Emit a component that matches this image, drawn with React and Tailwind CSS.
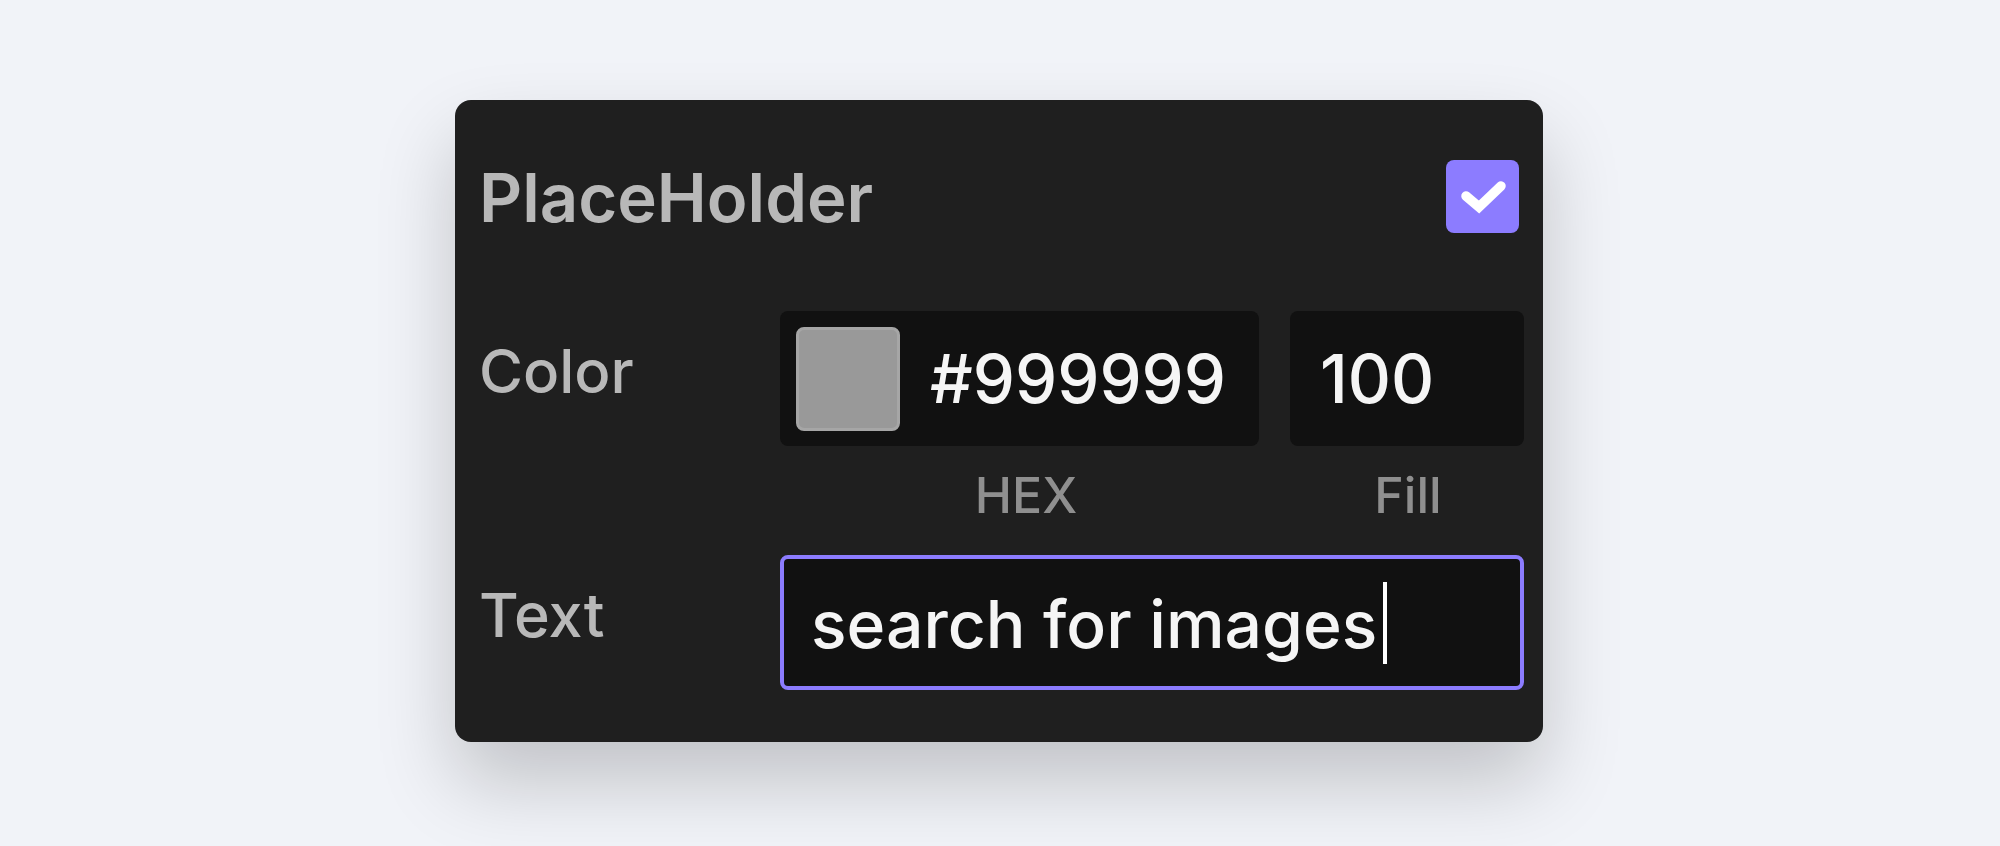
import React from 'react'

function App() {
  return (
    <div className="min-h-[846px] bg-[#f1f3f8] flex justify-center pt-[100px] pr-[2px] font-['Inter',sans-serif] [font-optical-sizing:none]">
      <div className="w-[1088px] h-[642px] bg-[#1f1f1f] rounded-[16px] shadow-[0_40px_80px_rgba(0,0,0,0.2)] pl-[24px] pr-[18px] flex flex-col">
        <div className="flex items-center justify-between mt-[59px] h-[74px] pr-[6px]">
          <span className="text-[67px] font-semibold text-[#b8b8b8] leading-none pt-[3px]">PlaceHolder</span>
          <div className="w-[73px] h-[73px] rounded-[8px] bg-[#8c7cff]">
            <svg width="73" height="73" viewBox="0 0 73 73" fill="none">
              <path d="M20 36 L33 47 L55 26" stroke="white" strokeWidth="9.5" strokeLinecap="round" />
            </svg>
          </div>
        </div>
        <div className="flex mt-[78px]">
          <span className="w-[301px] text-[60px] text-[#b8b8b8] font-medium leading-none pt-[30px]">Color</span>
          <div className="flex-1">
            <div className="flex gap-[31px]">
              <div className="w-[479px] h-[135px] bg-[#111111] rounded-[8px] flex items-center pl-[16px]">
                <div className="w-[104px] h-[104px] rounded-[8px] bg-[#999999] border-[3px] border-[#a6a6a6]" />
                <span className="ml-[30px] text-[67px] font-medium text-[#f5f5f5] leading-none">#999999</span>
              </div>
              <div className="w-[234px] h-[135px] bg-[#111111] rounded-[8px] flex items-center pl-[30px]">
                <span className="text-[67px] font-medium text-[#f5f5f5] leading-none">100</span>
              </div>
            </div>
            <div className="flex gap-[31px] mt-[24px]">
              <span className="w-[492px] text-center text-[50px] font-medium text-[#8f8f8f] leading-none">HEX</span>
              <span className="w-[234px] -ml-[12px] text-center text-[50px] text-[#8f8f8f] font-medium leading-none">Fill</span>
            </div>
          </div>
        </div>
        <div className="flex mt-[35px]">
          <span className="w-[301px] text-[61px] text-[#b8b8b8] font-medium leading-none pt-[30px]">Text</span>
          <div className="w-[744px] h-[135px] bg-[#111111] rounded-[8px] border-[4px] border-[#8c7cff] flex items-center pl-[27px]">
            <span className="text-[66px] font-medium text-[#f5f5f5] leading-none pt-[2px]">search for images</span>
            <div className="w-[4px] h-[82px] ml-[6px] bg-white" />
          </div>
        </div>
      </div>
    </div>
  )
}

export default App
